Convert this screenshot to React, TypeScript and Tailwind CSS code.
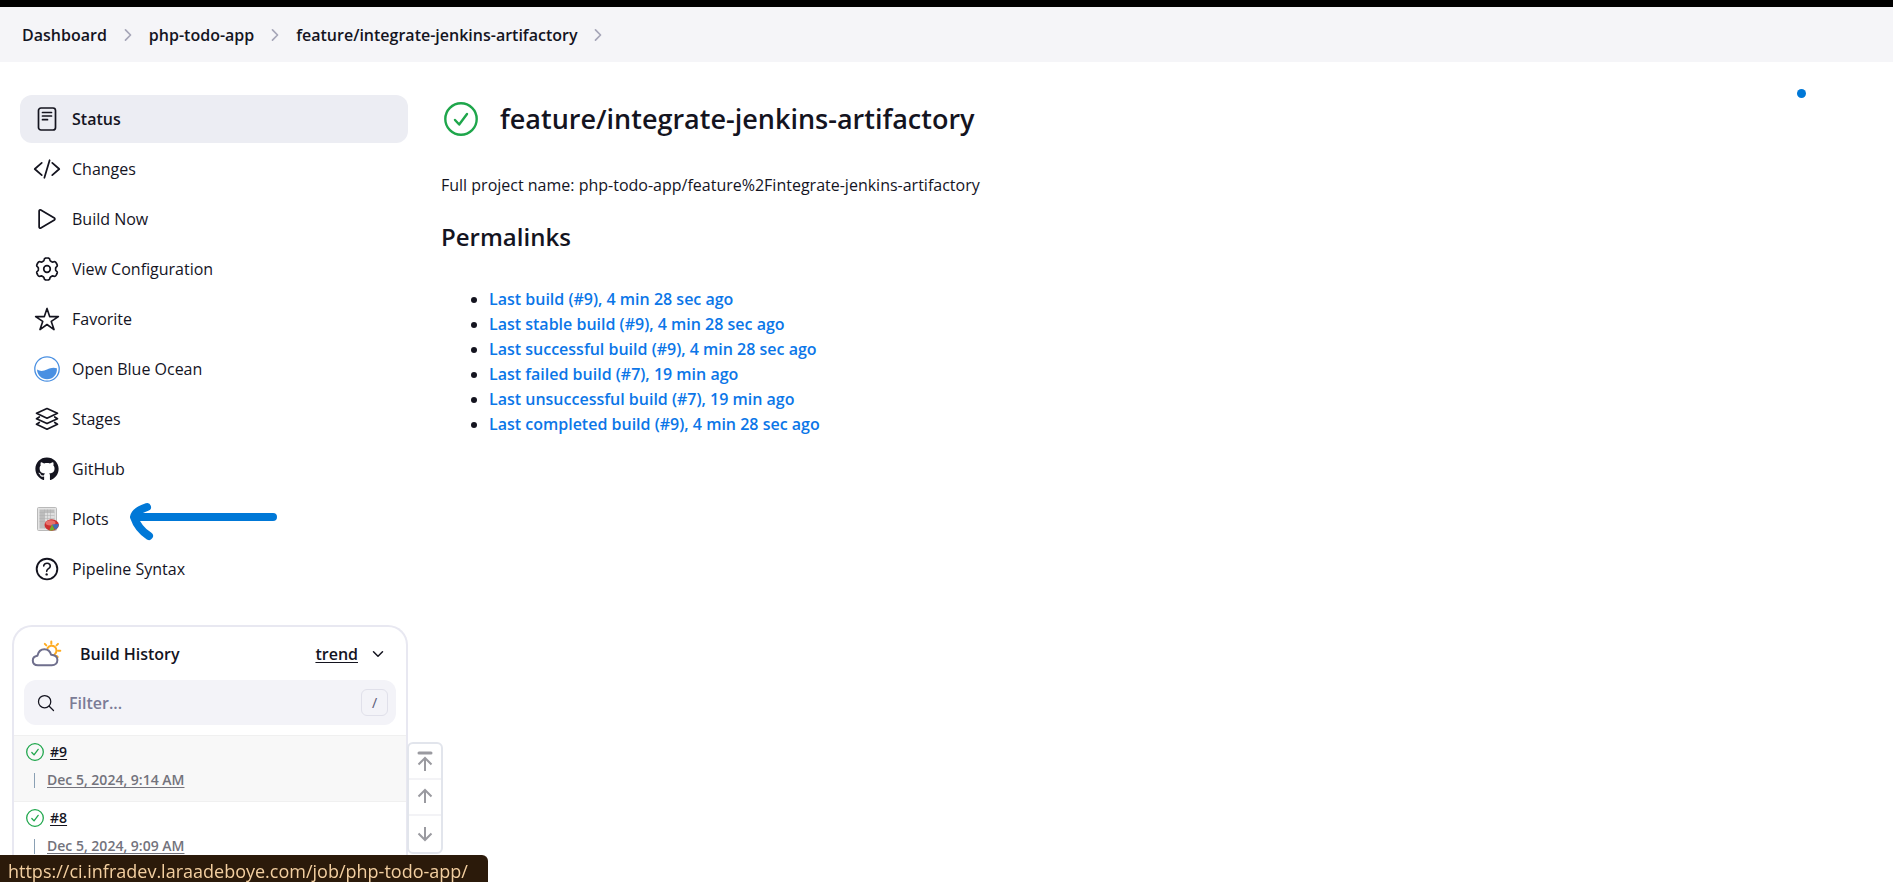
import React from "react";
import {
  IoChevronDown,
  IoChevronForward,
  IoCodeSlashOutline,
  IoHelpCircleOutline,
  IoPlayOutline,
  IoSearchOutline,
  IoStarOutline,
} from "react-icons/io5";
import { FaGithub } from "react-icons/fa";

// Outline of a six-toothed gear with soft corners, centred on (12, 12).
const gearPoints = Array.from({ length: 120 }, (_, i) => {
  const angle = (i / 120) * Math.PI * 2;
  const radius = 9.8 + 1.2 * Math.tanh(2.4 * (0.2 - Math.cos(6 * angle)));
  return `${(12 + radius * Math.cos(angle)).toFixed(2)},${(12 + radius * Math.sin(angle)).toFixed(2)}`;
}).join(" ");

function GearIcon() {
  return (
    <svg viewBox="0 0 24 24" className="size-6" fill="none" stroke="currentColor" strokeWidth="1.7" strokeLinejoin="round">
      <polygon points={gearPoints} />
      <circle cx="12" cy="12" r="3.3" />
    </svg>
  );
}

function StatusIcon() {
  return (
    <svg viewBox="0 0 24 24" className="size-6" fill="none" stroke="currentColor" strokeWidth="1.7" strokeLinecap="round">
      <rect x="3.5" y="1" width="17" height="22" rx="2.5" />
      <path d="M7.5 5.5h9M7.5 9h9M7.5 12.700h5" />
    </svg>
  );
}

function StagesIcon() {
  return (
    <svg viewBox="0 0 24 24" className="size-6" fill="none" stroke="currentColor" strokeWidth="1.7" strokeLinecap="round" strokeLinejoin="round">
      <path d="M12 1.500l10.500 4.700L12 11.200 1.500 6.200z" />
      <path d="M4.300 10L1.500 11.700 12 16.600l10.500-4.900L19.700 10" />
      <path d="M4.300 15.500L1.500 17.300 12 22.200l10.500-4.900-2.800-1.800" />
    </svg>
  );
}

function BlueOceanIcon() {
  return (
    <svg viewBox="0 0 26 26" className="size-[26px]">
      <circle cx="13" cy="13" r="12.200" fill="white" stroke="#4a90e2" strokeWidth="1.3" />
      <path d="M3 13.600C6 15.600 9.500 15.300 13 13.600c3.300-1.700 6.300-2.500 9.900-1.300C23.500 18.500 19 23.300 13 23.300c-5.300 0-9.600-3.700-10-9.700z" fill="#4a90e2" />
    </svg>
  );
}

function PlotsIcon() {
  return (
    <svg viewBox="0 0 24 24" className="size-6">
      <rect x="2.500" y="0.500" width="19" height="23" rx="1" fill="#e4e4e4" stroke="#b9b9b9" />
      <rect x="4.500" y="2.500" width="15" height="19" fill="#bdbdbd" />
      <rect x="9.500" y="5.500" width="10" height="14" fill="#dedede" />
      <path d="M4.500 5.500h15M4.500 8.500h15M4.500 11.500h15M4.500 14.500h15M9.500 2.500v19M12.500 2.500v19M15.500 2.500v19" stroke="#adadad" strokeWidth="0.500" />
      <ellipse cx="16.700" cy="18" rx="7.200" ry="5.700" fill="#cc2f2f" />
      <ellipse cx="15.500" cy="15.800" rx="5" ry="2.600" fill="#e8716c" />
      <path d="M17 17.500l6.800-.6c.2 2.700-1.500 4.600-3.700 5.600z" fill="#3f6fb5" />
      <path d="M17 17.500l2.600 5.300c-1.700.9-4 .9-5.300.5z" fill="#6fae2e" />
    </svg>
  );
}

function WeatherIcon() {
  return (
    <svg viewBox="0 0 32 28" className="h-7 w-8" fill="none" strokeWidth="2" strokeLinecap="round" strokeLinejoin="round">
      <g stroke="#feab20">
        <path d="M16.500 8.200a4.800 4.800 0 1 1 7.300 6" />
        <path d="M20.300 1.500v2.300M13.800 3.900l1.500 1.500M27 3.900l-1.500 1.500M27 10.800h2.300M25.700 16l1 1" />
      </g>
      <path d="M7 25.300c-3.200 0-5.200-2-5.200-4.800 0-2.600 1.900-4.400 4.600-4.800.9-3.800 3.500-6.400 7-6.400 3.400 0 5.800 2.200 6.700 5.400 3.800.2 6.300 2.200 6.300 5.400 0 3.100-2.300 5.200-5.600 5.200z" stroke="#6f6f8d" />
    </svg>
  );
}

function SuccessIcon({ className }: { className: string }) {
  return (
    <svg viewBox="0 0 34 34" className={className} fill="none" stroke="currentColor" strokeWidth="2.400" strokeLinecap="round" strokeLinejoin="round">
      <circle cx="17" cy="17" r="15.700" />
      <path d="M11 18l4.200 4.500L23 12" />
    </svg>
  );
}

const tasks = [
  { label: "Status", icon: <StatusIcon />, active: true },
  { label: "Changes", icon: <IoCodeSlashOutline className="size-7 shrink-0" /> },
  { label: "Build Now", icon: <IoPlayOutline className="size-7 shrink-0" /> },
  { label: "View Configuration", icon: <GearIcon /> },
  { label: "Favorite", icon: <IoStarOutline className="size-[26px]" /> },
  { label: "Open Blue Ocean", icon: <BlueOceanIcon /> },
  { label: "Stages", icon: <StagesIcon /> },
  { label: "GitHub", icon: <FaGithub className="size-6" /> },
  { label: "Plots", icon: <PlotsIcon />, marked: true },
  { label: "Pipeline Syntax", icon: <IoHelpCircleOutline className="size-[30px] shrink-0" /> },
];

const permalinks = [
  "Last build (#9), 4 min 28 sec ago",
  "Last stable build (#9), 4 min 28 sec ago",
  "Last successful build (#9), 4 min 28 sec ago",
  "Last failed build (#7), 19 min ago",
  "Last unsuccessful build (#7), 19 min ago",
  "Last completed build (#9), 4 min 28 sec ago",
];

const builds = [
  { id: "#9", date: "Dec 5, 2024, 9:14 AM", hovered: true },
  { id: "#8", date: "Dec 5, 2024, 9:09 AM", hovered: false },
];

function Breadcrumbs() {
  return (
    <nav aria-label="Breadcrumb" className="border-t-[7px] border-black bg-[#f5f5f8]">
      <ol className="flex h-[55px] items-center gap-3 px-[22px] font-semibold">
        {["Dashboard", "php-todo-app", "feature/integrate-jenkins-artifactory"].map((name) => (
          <li key={name} className="flex items-center gap-3">
            <a href="#">{name}</a>
            <IoChevronForward className="size-[18px] text-[#a6a6b8]" />
          </li>
        ))}
      </ol>
    </nav>
  );
}

function Tasks() {
  return (
    <nav aria-label="Tasks" className="ml-2 flex flex-col gap-[2px]">
      {tasks.map((task) => (
        <a
          key={task.label}
          href="#"
          className={
            task.active
              ? "relative flex h-12 items-center gap-3 rounded-xl bg-[#ecedf3] px-[14px] font-semibold"
              : "relative flex h-12 items-center gap-3 rounded-xl px-[14px]"
          }
        >
          <span className="flex w-[26px] shrink-0 justify-center">{task.icon}</span>
          {task.label}
          {task.marked && (
            <svg viewBox="0 0 148 40" className="absolute top-[6px] left-[109px] h-10 w-[148px]" fill="none" stroke="#0078d7" strokeWidth="8" strokeLinecap="round" strokeLinejoin="round">
              <path d="M144 16H6M18 6C12 8 6 11 5 16c2 6 7 14 15 19" />
            </svg>
          )}
        </a>
      ))}
    </nav>
  );
}

function BuildHistory() {
  return (
    <section className="mt-8 rounded-t-[20px] border-2 border-b-0 border-[#e8e8f1]">
      <header className="flex h-[53px] items-center pr-5 pl-[17px]">
        <WeatherIcon />
        <h2 className="ml-[17px] flex-1 font-semibold">Build History</h2>
        <a href="#" className="font-semibold underline underline-offset-2">trend</a>
        <button type="button" aria-label="Collapse" className="ml-3">
          <IoChevronDown className="size-4" />
        </button>
      </header>
      <label className="mx-[10px] flex h-[45px] items-center rounded-xl bg-[#f3f3f8] pr-2 pl-3">
        <IoSearchOutline className="size-5 shrink-0" />
        <input
          type="text"
          aria-label="Filter builds"
          placeholder="Filter..."
          className="ml-[13px] min-w-0 flex-1 bg-transparent font-semibold outline-none placeholder:text-[#7b7b96]"
        />
        <kbd className="flex size-[27px] items-center justify-center rounded-md border border-[#e0e0ea] font-sans text-sm text-[#60607a]">/</kbd>
      </label>
      <ul className="mt-[10px]">
        {builds.map((build) => (
          <li
            key={build.id}
            className={
              build.hovered
                ? "flex h-[66px] flex-col gap-1 border-t border-[#f0f0f0] bg-[#f8f8f8] pt-[6px] pl-3 text-sm font-semibold"
                : "flex h-[66px] flex-col gap-1 border-t border-[#f0f0f0] pt-[6px] pl-3 text-sm font-semibold"
            }
          >
            <div className="flex h-5 items-center gap-[6px]">
              <SuccessIcon className="size-[18px] text-[#1ea64b]" />
              <a href="#" className="underline underline-offset-2">{build.id}</a>
            </div>
            <div className="ml-2 flex h-7 items-center gap-3 text-[#73737c]">
              <span className="h-[15px] w-px bg-[#8aa0b4]" />
              <a href="#" className="underline underline-offset-2">{build.date}</a>
            </div>
          </li>
        ))}
      </ul>
    </section>
  );
}

function PageButtons() {
  const common = { viewBox: "0 0 16 20", className: "h-5 w-4", fill: "none", stroke: "#9a9aa0", strokeWidth: 2 };
  return (
    <div className="fixed bottom-[28px] left-[407px] flex w-9 flex-col divide-y-2 divide-[#f3f3f6] rounded-md border-2 border-[#e2e5ec] bg-white">
      <button type="button" aria-label="First page" className="flex h-9 items-center justify-center">
        <svg {...common}>
          <path d="M2 2h12" strokeWidth="3" strokeLinecap="round" />
          <path d="M8 20V7M1.500 13.500L8 7l6.500 6.500" />
        </svg>
      </button>
      <button type="button" aria-label="Previous page" className="flex h-9 items-center justify-center">
        <svg {...common}>
          <path d="M8 16V3M1.500 9.500L8 3l6.500 6.500" />
        </svg>
      </button>
      <button type="button" aria-label="Next page" className="flex h-9 items-center justify-center">
        <svg {...common}>
          <path d="M8 3v13M1.500 9.500L8 16l6.500-6.500" />
        </svg>
      </button>
    </div>
  );
}

export default function App() {
  return (
    <div className="relative min-h-screen bg-white font-['Open_Sans',sans-serif] text-base text-[#14141f]">
      <Breadcrumbs />
      <div className="flex gap-[33px] pt-[33px] pr-12 pl-3">
        <aside className="w-[396px] shrink-0">
          <Tasks />
          <BuildHistory />
        </aside>
        <main className="min-w-0 flex-1">
          <div className="flex h-12 items-center gap-[22px] pl-[3px]">
            <SuccessIcon className="size-[34px] text-[#1ea64b]" />
            <h1 className="text-[27px] font-semibold">feature/integrate-jenkins-artifactory</h1>
          </div>
          <p className="mt-[30px]">Full project name: php-todo-app/feature%2Fintegrate-jenkins-artifactory</p>
          <h2 className="mt-6 text-2xl font-semibold">Permalinks</h2>
          <ul className="mt-[34px] list-disc pl-12 leading-[25px] font-semibold">
            {permalinks.map((text) => (
              <li key={text}>
                <a href="#" className="text-[#0b76e8]">{text}</a>
              </li>
            ))}
          </ul>
        </main>
      </div>
      <span className="absolute top-[89px] right-[87px] size-[9px] rounded-full bg-[#0078d7]" />
      <PageButtons />
      <div className="fixed bottom-0 left-0 rounded-tr-md bg-[#2b1a0a] pt-[5px] pr-5 pl-2 text-lg leading-[22px] text-[#f3cfa0]">
        https://ci.infradev.laraadeboye.com/job/php-todo-app/
      </div>
    </div>
  );
}
